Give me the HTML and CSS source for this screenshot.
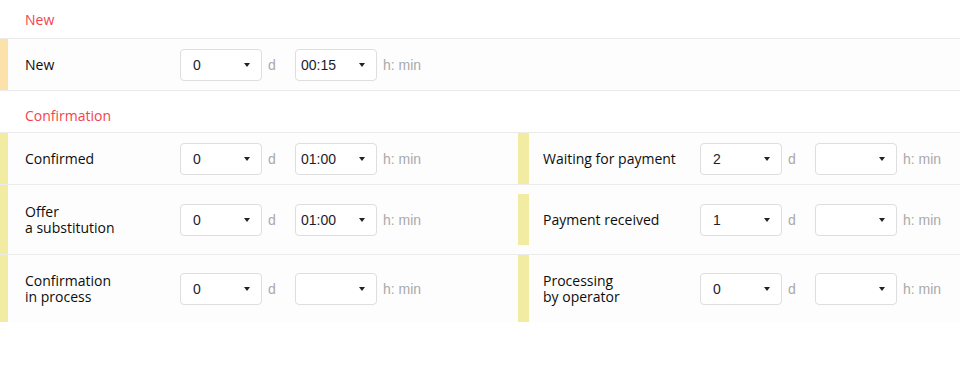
FILE: index.html
```html
<!DOCTYPE html>
<html lang="en">
<head>
    <meta charset="UTF-8">
    <title>Status timing</title>
    <link rel="stylesheet" href="styles.css">
</head>
<body>
    <div class="group-title first">New</div>
    <div class="group new">
        <div class="row">
            <div class="cell left">
                <div class="bar orange"></div>
                <div class="label">New</div>
                <div class="select"><span>0</span><i class="arrow"></i></div>
                <span class="unit">d</span>
                <div class="select time"><span>00:15</span><i class="arrow"></i></div>
                <span class="unit hm">h: min</span>
            </div>
        </div>
    </div>

    <div class="group-title">Confirmation</div>
    <div class="group">
        <div class="row">
            <div class="cell left">
                <div class="bar"></div>
                <div class="label">Confirmed</div>
                <div class="select"><span>0</span><i class="arrow"></i></div>
                <span class="unit">d</span>
                <div class="select time"><span>01:00</span><i class="arrow"></i></div>
                <span class="unit hm">h: min</span>
            </div>
            <div class="cell right">
                <div class="bar"></div>
                <div class="label">Waiting for payment</div>
                <div class="select"><span>2</span><i class="arrow"></i></div>
                <span class="unit">d</span>
                <div class="select time"><span></span><i class="arrow"></i></div>
                <span class="unit hm">h: min</span>
            </div>
        </div>
        <div class="row tall">
            <div class="cell left">
                <div class="bar"></div>
                <div class="label">Offer<br>a substitution</div>
                <div class="select"><span>0</span><i class="arrow"></i></div>
                <span class="unit">d</span>
                <div class="select time"><span>01:00</span><i class="arrow"></i></div>
                <span class="unit hm">h: min</span>
            </div>
            <div class="cell right">
                <div class="bar inset"></div>
                <div class="label">Payment received</div>
                <div class="select"><span>1</span><i class="arrow"></i></div>
                <span class="unit">d</span>
                <div class="select time"><span></span><i class="arrow"></i></div>
                <span class="unit hm">h: min</span>
            </div>
        </div>
        <div class="row last">
            <div class="cell left">
                <div class="bar"></div>
                <div class="label">Confirmation<br>in process</div>
                <div class="select"><span>0</span><i class="arrow"></i></div>
                <span class="unit">d</span>
                <div class="select time"><span></span><i class="arrow"></i></div>
                <span class="unit hm">h: min</span>
            </div>
            <div class="cell right">
                <div class="bar"></div>
                <div class="label">Processing<br>by operator</div>
                <div class="select"><span>0</span><i class="arrow"></i></div>
                <span class="unit">d</span>
                <div class="select time"><span></span><i class="arrow"></i></div>
                <span class="unit hm">h: min</span>
            </div>
        </div>
    </div>
</body>
</html>
```

FILE: styles.css
```css
body {
    margin: 0;
    background: #fff;
    font-family: 'Open Sans', 'Noto Sans', sans-serif;
    color: #0d0d0d;
}

/* Section titles */
.group-title {
    color: #f4434d;
    font-size: 14px;
    line-height: 18px;
    padding: 16px 0 7px 25px;
}

.group-title.first {
    padding: 11px 0 9px 25px;
}

.row {
    display: flex;
    height: 51px;
    border-top: 1px solid #ebebeb;
    background: #fdfdfd;
}

.row.tall {
    height: 69px;
}

.row.last {
    height: 67px;
}

.group.new .row {
    border-bottom: 1px solid #ebebeb;
}

.cell {
    display: flex;
    align-items: center;
}

.cell.left {
    width: 518px;
}

.bar {
    align-self: stretch;
    width: 8px;
    background: #f2eca2;
}

.bar.orange {
    background: #fde1ab;
}

.right .bar {
    width: 11px;
}

.right .bar.inset {
    margin: 9px 0;
}

.label {
    box-sizing: border-box;
    width: 172px;
    padding-left: 17px;
    font-size: 14px;
    line-height: 16px;
}

.right .label {
    width: 171px;
    padding-left: 14px;
}

/* Dropdowns */
.select {
    box-sizing: border-box;
    width: 82px;
    height: 32px;
    display: flex;
    align-items: center;
    justify-content: space-between;
    padding: 0 11px 0 12px;
    background: #fff;
    border: 1px solid #dedede;
    border-radius: 4px;
    font-family: 'Liberation Sans', Arial, sans-serif;
    font-size: 14px;
    color: #1c1c2e;
}

.select.time {
    padding-left: 5px;
}

.arrow {
    width: 0;
    height: 0;
    border-left: 3.5px solid transparent;
    border-right: 3.5px solid transparent;
    border-top: 4px solid #222;
}

.unit {
    box-sizing: border-box;
    width: 33px;
    padding-left: 6px;
    font-family: 'Liberation Sans', Arial, sans-serif;
    font-size: 14px;
    color: #aaa;
    white-space: nowrap;
}

.unit.hm {
    width: auto;
}
```
